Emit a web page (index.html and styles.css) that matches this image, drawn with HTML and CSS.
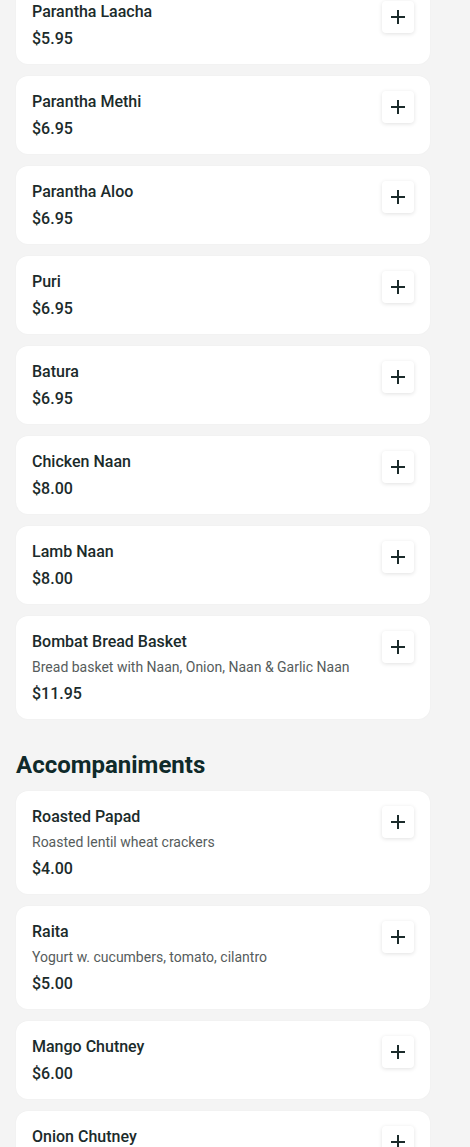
FILE: index.html
```html
<!DOCTYPE html>
<html lang="en">
<head>
    <meta charset="UTF-8">
    <meta name="viewport" content="width=device-width, initial-scale=1.0">
    <title>Menu</title>
    <link rel="stylesheet" href="styles.css">
</head>
<body>

<div class="menu">
    <section class="menu-section first">
        <div class="items">
            <div class="item">
                <div class="item-info">
                    <div class="item-name">Parantha Laacha</div>
                    <div class="item-price">$5.95</div>
                </div>
                <button class="add-btn" aria-label="Add"><svg viewBox="0 0 14 14"><path d="M7 0v14M0 7h14"/></svg></button>
            </div>
            <div class="item">
                <div class="item-info">
                    <div class="item-name">Parantha Methi</div>
                    <div class="item-price">$6.95</div>
                </div>
                <button class="add-btn" aria-label="Add"><svg viewBox="0 0 14 14"><path d="M7 0v14M0 7h14"/></svg></button>
            </div>
            <div class="item">
                <div class="item-info">
                    <div class="item-name">Parantha Aloo</div>
                    <div class="item-price">$6.95</div>
                </div>
                <button class="add-btn" aria-label="Add"><svg viewBox="0 0 14 14"><path d="M7 0v14M0 7h14"/></svg></button>
            </div>
            <div class="item">
                <div class="item-info">
                    <div class="item-name">Puri</div>
                    <div class="item-price">$6.95</div>
                </div>
                <button class="add-btn" aria-label="Add"><svg viewBox="0 0 14 14"><path d="M7 0v14M0 7h14"/></svg></button>
            </div>
            <div class="item">
                <div class="item-info">
                    <div class="item-name">Batura</div>
                    <div class="item-price">$6.95</div>
                </div>
                <button class="add-btn" aria-label="Add"><svg viewBox="0 0 14 14"><path d="M7 0v14M0 7h14"/></svg></button>
            </div>
            <div class="item">
                <div class="item-info">
                    <div class="item-name">Chicken Naan</div>
                    <div class="item-price">$8.00</div>
                </div>
                <button class="add-btn" aria-label="Add"><svg viewBox="0 0 14 14"><path d="M7 0v14M0 7h14"/></svg></button>
            </div>
            <div class="item">
                <div class="item-info">
                    <div class="item-name">Lamb Naan</div>
                    <div class="item-price">$8.00</div>
                </div>
                <button class="add-btn" aria-label="Add"><svg viewBox="0 0 14 14"><path d="M7 0v14M0 7h14"/></svg></button>
            </div>
            <div class="item">
                <div class="item-info">
                    <div class="item-name">Bombat Bread Basket</div>
                    <div class="item-desc">Bread basket with Naan, Onion, Naan &amp; Garlic Naan</div>
                    <div class="item-price">$11.95</div>
                </div>
                <button class="add-btn" aria-label="Add"><svg viewBox="0 0 14 14"><path d="M7 0v14M0 7h14"/></svg></button>
            </div>
        </div>
    </section>

    <section class="menu-section">
        <h2 class="section-title">Accompaniments</h2>
        <div class="items">
            <div class="item">
                <div class="item-info">
                    <div class="item-name">Roasted Papad</div>
                    <div class="item-desc">Roasted lentil wheat crackers</div>
                    <div class="item-price">$4.00</div>
                </div>
                <button class="add-btn" aria-label="Add"><svg viewBox="0 0 14 14"><path d="M7 0v14M0 7h14"/></svg></button>
            </div>
            <div class="item">
                <div class="item-info">
                    <div class="item-name">Raita</div>
                    <div class="item-desc">Yogurt w. cucumbers, tomato, cilantro</div>
                    <div class="item-price">$5.00</div>
                </div>
                <button class="add-btn" aria-label="Add"><svg viewBox="0 0 14 14"><path d="M7 0v14M0 7h14"/></svg></button>
            </div>
            <div class="item">
                <div class="item-info">
                    <div class="item-name">Mango Chutney</div>
                    <div class="item-price">$6.00</div>
                </div>
                <button class="add-btn" aria-label="Add"><svg viewBox="0 0 14 14"><path d="M7 0v14M0 7h14"/></svg></button>
            </div>
            <div class="item">
                <div class="item-info">
                    <div class="item-name">Onion Chutney</div>
                    <div class="item-price">$6.00</div>
                </div>
                <button class="add-btn" aria-label="Add"><svg viewBox="0 0 14 14"><path d="M7 0v14M0 7h14"/></svg></button>
            </div>
        </div>
    </section>
</div>

</body>
</html>
```

FILE: styles.css
```css
body {
    margin: 0;
    background-color: #f4f4f4;
    font-family: Roboto, "Liberation Sans", sans-serif;
    color: #1b2b2b;
}

.menu {
    width: 414px;
    padding: 0 16px;
}

/* La lista empieza desplazada: la página está con scroll */
.menu-section.first {
    margin-top: -14px;
}

.section-title {
    margin: 30px 0 10px;
    font-size: 24px;
    line-height: 32px;
    font-weight: 700;
    color: #0f2a2a;
}

.items {
    display: flex;
    flex-direction: column;
    gap: 12px;
}

.item {
    display: flex;
    justify-content: space-between;
    align-items: flex-start;
    padding: 16px 16px 15px;
    background-color: #fff;
    border-radius: 12px;
    box-shadow: 0 0 2px rgba(0, 0, 0, 0.04);
}

.item-info {
    display: flex;
    flex-direction: column;
    gap: 6px;
}

.item-name {
    font-size: 16px;
    line-height: 20px;
    font-weight: 500;
}

.item-desc {
    font-size: 14px;
    line-height: 19px;
    color: #565c5c;
}

.item-price {
    margin-top: 1px;
    font-size: 16px;
    line-height: 20px;
    font-weight: 500;
}

.add-btn {
    display: flex;
    align-items: center;
    justify-content: center;
    width: 32px;
    height: 32px;
    margin-top: -1px;
    padding: 0;
    border: none;
    border-radius: 4px;
    background-color: #fff;
    box-shadow: 0 1px 4px rgba(0, 0, 0, 0.12);
    flex-shrink: 0;
}

.add-btn svg {
    width: 14px;
    height: 14px;
    stroke: #1b2b2b;
    stroke-width: 2;
    fill: none;
}
```
